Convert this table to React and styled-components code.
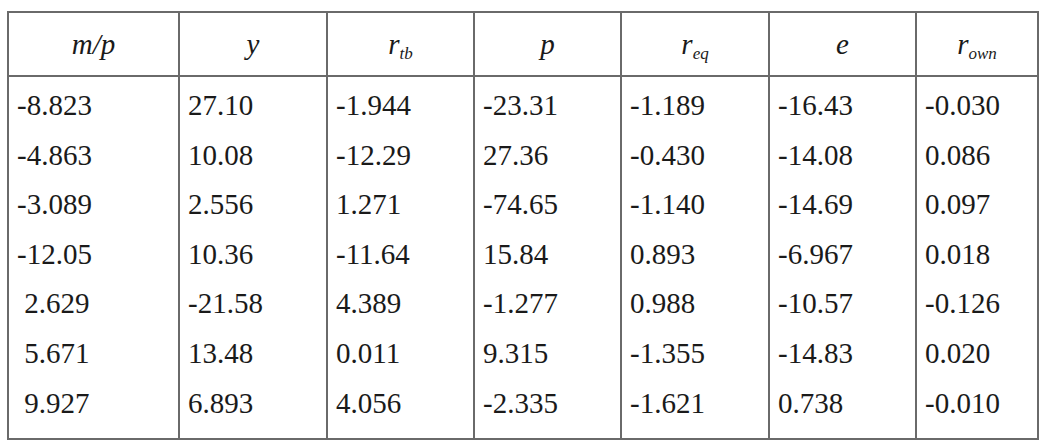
import styled, { createGlobalStyle } from "styled-components";

const GlobalStyle = createGlobalStyle`
  body {
    margin: 0;
    padding: 11px 0 0 7px;
    background: #ffffff;
    font-family: "Liberation Serif", "Times New Roman", serif;
  }
`;

const columns = [
  { name: "m/p", width: 171 },
  { name: "y", width: 148 },
  { name: "r", sub: "tb", width: 147 },
  { name: "p", width: 147 },
  { name: "r", sub: "eq", width: 148 },
  { name: "e", width: 147 },
  { name: "r", sub: "own", width: 122 },
];

const rows = [
  ["-8.823", "27.10", "-1.944", "-23.31", "-1.189", "-16.43", "-0.030"],
  ["-4.863", "10.08", "-12.29", "27.36", "-0.430", "-14.08", "0.086"],
  ["-3.089", "2.556", "1.271", "-74.65", "-1.140", "-14.69", "0.097"],
  ["-12.05", "10.36", "-11.64", "15.84", "0.893", "-6.967", "0.018"],
  [" 2.629", "-21.58", "4.389", "-1.277", "0.988", "-10.57", "-0.126"],
  [" 5.671", "13.48", "0.011", "9.315", "-1.355", "-14.83", "0.020"],
  [" 9.927", "6.893", "4.056", "-2.335", "-1.621", "0.738", "-0.010"],
];

export default function App() {
  return (
    <>
      <GlobalStyle />
      <Table>
        <colgroup>
          {columns.map((col, i) => (
            <col key={i} style={{ width: col.width }} />
          ))}
        </colgroup>
        <thead>
          <tr>
            {columns.map((col, i) => (
              <HeadCell key={i}>
                {col.name}
                {col.sub && <Sub>{col.sub}</Sub>}
              </HeadCell>
            ))}
          </tr>
        </thead>
        <tbody>
          {rows.map((row, r) => (
            <tr key={r}>
              {row.map((value, c) => (
                <DataCell key={c} $first={r === 0} $last={r === rows.length - 1}>
                  {value}
                </DataCell>
              ))}
            </tr>
          ))}
        </tbody>
      </Table>
    </>
  );
}

// CSS
const Table = styled.table`
  border-collapse: collapse;
  table-layout: fixed;
  width: 1032px;
  border: 2px solid #6a6a6a;
  color: #1a1a1a;
  font-size: 29px;
`;

const HeadCell = styled.th`
  height: 62px;
  padding: 0;
  border: 2px solid #6a6a6a;
  font-weight: normal;
  font-style: italic;
  text-align: center;
  vertical-align: middle;
  line-height: 32px;
`;

const Sub = styled.sub`
  font-size: 17px;
  vertical-align: -5px;
  line-height: 0;
`;

const DataCell = styled.td`
  padding: ${(p) => (p.$first ? "4px" : "0")} 8px ${(p) => (p.$last ? "10px" : "0")} 8px;
  border-left: 2px solid #6a6a6a;
  border-right: 2px solid #6a6a6a;
  line-height: 49.6px;
  white-space: pre;
  text-align: left;
  vertical-align: top;
`;
